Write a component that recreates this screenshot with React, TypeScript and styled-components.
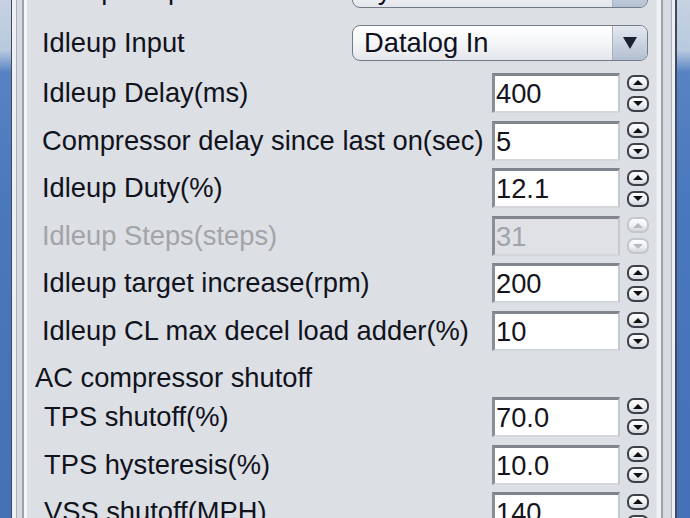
import styled, { createGlobalStyle, css } from 'styled-components';

const GlobalStyle = createGlobalStyle`
  html, body {
    margin: 0;
    padding: 0;
    background: #dcdfe4;
    overflow: hidden;
  }
  body {
    font-family: 'Liberation Sans', Arial, sans-serif;
  }
`;

type FieldRowData = {
  label: string;
  value: string;
  disabled?: boolean;
};

const idleupFields: FieldRowData[] = [
  { label: 'Idleup Delay(ms)', value: '400' },
  { label: 'Compressor delay since last on(sec)', value: '5' },
  { label: 'Idleup Duty(%)', value: '12.1' },
  { label: 'Idleup Steps(steps)', value: '31', disabled: true },
  { label: 'Idleup target increase(rpm)', value: '200' },
  { label: 'Idleup CL max decel load adder(%)', value: '10' },
];

const shutoffFields: FieldRowData[] = [
  { label: 'TPS shutoff(%)', value: '70.0' },
  { label: 'TPS hysteresis(%)', value: '10.0' },
  { label: 'VSS shutoff(MPH)', value: '140' },
];

const Spinner = ({ disabled }: { disabled?: boolean }) => (
  <SpinColumn>
    <SpinButton $disabled={disabled} $dir="up" />
    <SpinButton $disabled={disabled} $dir="down" />
  </SpinColumn>
);

const FieldRow = ({ label, value, disabled, indent }: FieldRowData & { indent?: number }) => (
  <Row $indent={indent}>
    <Label $disabled={disabled}>{label}</Label>
    <TextField $disabled={disabled}>{value}</TextField>
    <Spinner disabled={disabled} />
  </Row>
);

export default function App() {
  return (
    <>
      <GlobalStyle />
      <Screen>
        <LeftEdge>
          <Desktop $side="left" />
          <FrameLeft />
        </LeftEdge>

        <Panel>
          <Form>
            <ComboRow $after={17}>
              <Label>Idleup Output</Label>
              <Combo>
                <ComboText>Jy</ComboText>
                <ComboArrow />
              </Combo>
            </ComboRow>
            <ComboRow $after={12}>
              <Label>Idleup Input</Label>
              <Combo>
                <ComboText>Datalog In</ComboText>
                <ComboArrow />
              </Combo>
            </ComboRow>

            {idleupFields.map((f) => (
              <FieldRow key={f.label} {...f} />
            ))}

            <SectionTitle>AC compressor shutoff</SectionTitle>

            {shutoffFields.map((f) => (
              <FieldRow key={f.label} {...f} indent={17} />
            ))}
          </Form>
        </Panel>

        <RightEdge>
          <FrameRight />
          <Desktop $side="right" />
        </RightEdge>
      </Screen>
    </>
  );
}

const Screen = styled.div`
  display: flex;
  width: 690px;
  height: 518px;
  overflow: hidden;
  background: #dcdfe4;
`;

const LeftEdge = styled.div`
  display: flex;
  flex: 0 0 27px;
`;

const RightEdge = styled.div`
  display: flex;
  flex: 0 0 34px;
`;

const Desktop = styled.div<{ $side: 'left' | 'right' }>`
  flex: 0 0 ${({ $side }) => ($side === 'left' ? '11px' : '13px')};
  background: linear-gradient(
    to bottom,
    #c7d2e2 0px,
    #b9c9de 50px,
    #5883c3 72px,
    #4a78bd 200px,
    #4571b6 518px
  );
`;

const FrameLeft = styled.div`
  flex: 1;
  background: linear-gradient(
    to right,
    #3f4b5c 0px,
    #3f4b5c 1px,
    #eef0f3 1px,
    #eef0f3 5px,
    #a9afb8 5px,
    #a9afb8 6px,
    #d7dbe1 6px,
    #d7dbe1 11px,
    #9da3ac 11px,
    #9da3ac 13px,
    #f4f5f7 13px,
    #f4f5f7 16px
  );
`;

const FrameRight = styled.div`
  flex: 1;
  background: linear-gradient(
    to right,
    #dcdfe4 0px,
    #eef0f3 1px,
    #eef0f3 5px,
    #9da3ac 5px,
    #9da3ac 7px,
    #d7dbe1 7px,
    #d7dbe1 15px,
    #a9afb8 15px,
    #a9afb8 16px,
    #eef0f3 16px,
    #eef0f3 19px,
    #3f4b5c 19px,
    #3f4b5c 21px
  );
`;

const Panel = styled.div`
  flex: 1;
  overflow: hidden;
`;

const Form = styled.div`
  display: flex;
  flex-direction: column;
  margin-top: -28px;
`;

const Label = styled.div<{ $disabled?: boolean }>`
  flex: 1;
  min-width: 0;
  white-space: nowrap;
  font-size: 27.3px;
  color: ${({ $disabled }) => ($disabled ? '#a2a4a8' : '#10121c')};
`;

const ComboRow = styled.div<{ $after: number }>`
  display: flex;
  align-items: center;
  height: 36px;
  padding: 0 8px 0 15px;
  margin-bottom: ${({ $after }) => $after}px;
`;

const Combo = styled.div`
  display: flex;
  flex: 0 0 296px;
  height: 36px;
  box-sizing: border-box;
  border: 1.5px solid #737b88;
  border-radius: 8px;
  overflow: hidden;
  background: linear-gradient(to bottom, #ffffff 0%, #f4f5f7 50%, #e3e6eb 100%);
`;

const ComboText = styled.div`
  flex: 1;
  padding-left: 11px;
  font-size: 27.3px;
  line-height: 33px;
  color: #0e1020;
`;

const ComboArrow = styled.div`
  flex: 0 0 34px;
  display: flex;
  align-items: center;
  justify-content: center;
  border-left: 1px solid #a7b1bf;
  background: linear-gradient(to bottom, #e4e9f0 0%, #cbd4e0 50%, #b3c0d1 100%);

  &::after {
    content: '';
    border-left: 7px solid transparent;
    border-right: 7px solid transparent;
    border-top: 12px solid #1b2130;
  }
`;

const Row = styled.div<{ $indent?: number }>`
  display: flex;
  align-items: center;
  height: 40px;
  margin-bottom: 7.6px;
  padding: 0 7px 0 ${({ $indent }) => $indent ?? 15}px;
`;

const SectionTitle = styled.div`
  display: flex;
  align-items: center;
  height: 38.4px;
  padding-left: 8px;
  font-size: 27.3px;
  color: #10121c;
`;

const TextField = styled.div<{ $disabled?: boolean }>`
  flex: 0 0 128px;
  height: 40px;
  box-sizing: border-box;
  border-style: solid;
  border-width: 3px 2px 2px 3px;
  border-color: #80858d #c5c9cf #d3d6db #8a8f97;
  padding-left: 1px;
  font-size: 27.3px;
  line-height: 35px;
  white-space: nowrap;
  background: ${({ $disabled }) => ($disabled ? '#dfe1e5' : '#ffffff')};
  color: ${({ $disabled }) => ($disabled ? '#a0a3a8' : '#16141c')};
`;

const SpinColumn = styled.div`
  display: flex;
  flex-direction: column;
  justify-content: space-between;
  flex: 0 0 22px;
  height: 37px;
  margin-left: 7px;
`;

const SpinButton = styled.div<{ $disabled?: boolean; $dir: 'up' | 'down' }>`
  display: flex;
  align-items: center;
  justify-content: center;
  height: 16px;
  box-sizing: border-box;
  border: 2px solid ${({ $disabled }) => ($disabled ? '#c3c6cb' : '#3c4049')};
  border-radius: 7px;
  background: linear-gradient(to bottom, #ffffff 0%, #eceef1 60%, #d3d6dc 100%);

  &::after {
    content: '';
    border-left: 5px solid transparent;
    border-right: 5px solid transparent;
    ${({ $dir, $disabled }) =>
      $dir === 'up'
        ? css`
            border-bottom: 5px solid ${$disabled ? '#b6b9be' : '#111'};
          `
        : css`
            border-top: 5px solid ${$disabled ? '#b6b9be' : '#111'};
          `}
  }
`;
